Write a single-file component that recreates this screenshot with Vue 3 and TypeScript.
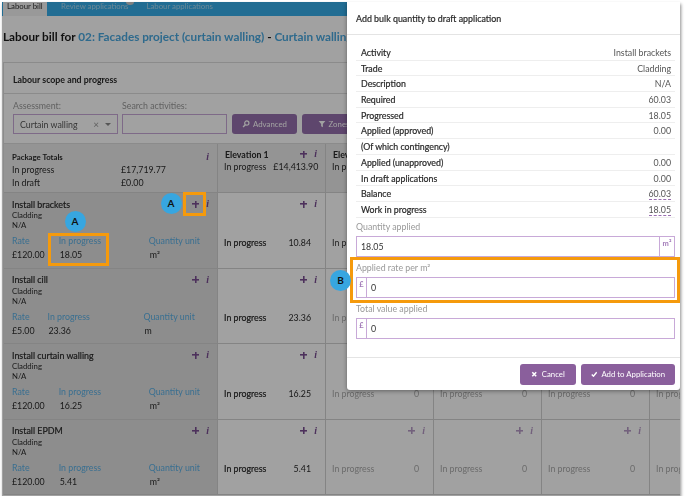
<script setup lang="ts">
interface Activity {
  name: string
  rate: string
  progress: string
  applied: string
  unit: string
  narrow?: boolean
}

const activities: Activity[] = [
  { name: 'Install brackets', rate: '£120.00', progress: '18.05', applied: '10.84', unit: 'm²' },
  { name: 'Install cill', rate: '£5.00', progress: '23.36', applied: '23.36', unit: 'm', narrow: true },
  { name: 'Install curtain walling', rate: '£120.00', progress: '16.25', applied: '16.25', unit: 'm²' },
  { name: 'Install EPDM', rate: '£120.00', progress: '5.41', applied: '5.41', unit: 'm²' }
]

const otherCols = [0, 1, 2, 3]

const facts: [string, string, boolean?][] = [
  ['Activity', 'Install brackets'],
  ['Trade', 'Cladding'],
  ['Description', 'N/A'],
  ['Required', '60.03'],
  ['Progressed', '18.05'],
  ['Applied (approved)', '0.00'],
  ['(Of which contingency)', ''],
  ['Applied (unapproved)', '0.00'],
  ['In draft applications', '0.00'],
  ['Balance', '60.03', true],
  ['Work in progress', '18.05', true]
]
</script>

<template>
  <div class="shot">
    <nav class="tabs">
      <span class="tab active">Labour bill</span>
      <span class="tab review">Review applications<i class="dot"></i></span>
      <span class="tab last">Labour applications</span>
    </nav>

    <h1 class="title">
      Labour bill for <a>02: Facades project (curtain walling)</a> - <a>Curtain walling</a>
    </h1>

    <section class="panel">
      <h2 class="panel-head">Labour scope and progress</h2>
      <div class="filters">
        <div class="field">
          <label>Assessment:</label>
          <div class="box select">
            <span>Curtain walling</span>
            <span class="sel-icons"><b>×</b><i class="caret"></i></span>
          </div>
        </div>
        <div class="field">
          <label>Search activities:</label>
          <div class="box"></div>
        </div>
        <button class="dark-btn adv">
          <svg viewBox="0 0 12 12" class="ico"><circle cx="7.2" cy="4.6" r="3.2" fill="none" stroke="currentColor" stroke-width="1.8" /><path d="M5 7 1.6 10.4" stroke="currentColor" stroke-width="2.2" /></svg>
          Advanced
        </button>
        <button class="dark-btn zones">
          <svg viewBox="0 0 12 12" class="ico"><path d="M1 1.5h10L7.3 6v5L4.7 9.5V6z" fill="currentColor" /></svg>
          Zones
        </button>
      </div>

      <div class="grid-row head-row">
        <div class="first totals">
          <div class="pkg"><span>Package Totals</span><em class="inf">i</em></div>
          <div class="tot"><span>In progress</span><span>£17,719.77</span></div>
          <div class="tot"><span>In draft</span><span>£0.00</span></div>
        </div>
        <div class="cell elev">
          <div class="elev-top"><b>Elevation 1</b><span class="acts"><span class="plus"></span><em class="inf">i</em></span></div>
          <div class="elev-val"><span>In progress</span><span>£14,413.90</span></div>
        </div>
        <div class="cell elev">
          <div class="elev-top"><b>Elevation 2</b></div>
          <div class="elev-val"><span>In progress</span></div>
        </div>
        <div v-for="c in 3" :key="c" class="cell elev"></div>
      </div>

      <div v-for="(a, r) in activities" :key="a.name" class="grid-row act-row">
        <div class="first">
          <div class="act-top"><span class="act-name">{{ a.name }}</span><span class="acts"><span class="plus"></span><em class="inf">i</em></span></div>
          <div class="sub">Cladding</div>
          <div class="sub">N/A</div>
          <div class="stats" :class="{ narrow: a.narrow }">
            <span class="lab">Rate</span><span class="lab">In progress</span><span class="lab">Quantity unit</span>
            <span class="val">{{ a.rate }}</span><span class="val in">{{ a.progress }}</span><span class="val in">{{ a.unit }}</span>
          </div>
        </div>
        <div class="cell act">
          <span class="acts end"><span class="plus"></span><em class="inf">i</em></span>
          <div class="prog"><span class="strong">In progress</span><span>{{ a.applied }}</span></div>
        </div>
        <div v-for="c in otherCols" :key="c" class="cell act muted" :class="{ live: r === 0 && c === 0 }">
          <span class="acts end"><span v-if="r === 3" class="plus"></span><em v-if="r === 3" class="inf">i</em></span>
          <div v-if="r >= 2 || c === 0" class="prog"><span>In progress</span><span v-if="r >= 2">0</span></div>
        </div>
      </div>
    </section>

    <div class="overlay"></div>

    <aside class="modal">
      <h3 class="modal-head">Add bulk quantity to draft application</h3>
      <div class="modal-body">
        <div v-for="f in facts" :key="f[0]" class="fact">
          <span>{{ f[0] }}</span>
          <span class="fact-val" :class="{ dashed: f[2] }">{{ f[1] }}</span>
        </div>
        <label class="mlabel first-label">Quantity applied</label>
        <div class="minput"><span class="mval">18.05</span><span class="addon right">m²</span></div>
        <label class="mlabel">Applied rate per m²</label>
        <div class="minput"><span class="addon">£</span><span class="mval">0</span></div>
        <label class="mlabel">Total value applied</label>
        <div class="minput"><span class="addon">£</span><span class="mval">0</span></div>
      </div>
      <footer class="modal-foot">
        <button class="btn cancel">
          <svg viewBox="0 0 10 10" class="ico2"><path d="M2 2l6 6M8 2l-6 6" stroke="currentColor" stroke-width="2.4" /></svg>
          Cancel
        </button>
        <button class="btn add">
          <svg viewBox="0 0 10 10" class="ico2"><path d="M1.2 5.4 3.8 8 8.8 2" fill="none" stroke="currentColor" stroke-width="2.2" /></svg>
          Add to Application
        </button>
      </footer>
    </aside>

    <span class="mark box-a1"></span>
    <span class="mark box-a2"></span>
    <span class="mark box-b"></span>
    <span class="badge b-a1">A</span>
    <span class="badge b-a2">A</span>
    <span class="badge b-b">B</span>
  </div>
</template>

<style>
html, body { margin: 0; background: #fff; }
</style>

<style scoped>
.shot {
  position: relative;
  width: 678px;
  height: 494px;
  margin: 2px 0 0 2px;
  overflow: hidden;
  background: #fff;
  font-family: Lato, "Liberation Sans", sans-serif;
  font-size: 8.8px;
  color: #2a2a2a;
  box-shadow: 1px 2px 3px rgba(0, 0, 0, .45);
  filter: blur(.4px);
}
.tabs {
  display: flex;
  height: 14px;
  background: #37ade9;
  overflow: hidden;
  padding-left: 1px;
  box-sizing: border-box;
}
.tab { color: #a9d8ee; font-size: 7.8px; line-height: 8px; margin-left: 14px; white-space: nowrap; }
.tab.active {
  margin-left: 0;
  width: 44px;
  background: #f2f2f2;
  color: #333;
  padding-left: 4px;
  box-sizing: border-box;
}
.tab.review { position: relative; }
.tab.last { margin-left: 18px; }
.dot {
  position: absolute;
  right: -6px;
  top: -3px;
  width: 8px;
  height: 6px;
  border-radius: 50%;
  background: #ccc;
}
.title {
  margin: 11px 0 0 1px;
  font-size: 11.75px;
  line-height: 20px;
  font-weight: 700;
  color: #1a1a1a;
  white-space: nowrap;
}
.title a { color: #4aa8df; font-weight: 700; }
.panel {
  margin: 15px 0 0 1px;
  border: 1px solid #dcdcdc;
  border-bottom: 0;
  background: #fff;
  width: 760px;
}
.panel-head {
  margin: 0;
  height: 30px;
  padding-left: 9px;
  font-size: 8.8px;
  line-height: 33px;
  font-weight: 700;
  border-bottom: 1px solid #dcdcdc;
}
.filters {
  display: flex;
  align-items: flex-end;
  gap: 4px;
  height: 50px;
  box-sizing: border-box;
  padding: 0 0 9px 9px;
  border-bottom: 1px solid #dcdcdc;
}
.field { display: flex; flex-direction: column; gap: 3px; width: 105px; }
.field label { color: #999; line-height: 11px; }
.box {
  height: 20px;
  box-sizing: border-box;
  border: 1px solid #c8a9d8;
  display: flex;
  align-items: center;
  justify-content: space-between;
  padding: 0 6px;
  color: #555;
}
.sel-icons { display: flex; align-items: center; gap: 6px; color: #999; }
.sel-icons b { font-weight: 400; font-size: 10px; }
.caret { width: 0; height: 0; border: 3px solid transparent; border-top-color: #888; border-bottom: 0; }
.dark-btn {
  height: 20px;
  border: 0;
  border-radius: 3px;
  background: #9670ad;
  color: #fff;
  font: inherit;
  font-size: 7.8px;
  display: flex;
  align-items: center;
  justify-content: center;
  gap: 3px;
  padding: 0;
  flex: none;
}
.adv { width: 65px; margin-left: 1px; margin-right: 1px; }
.zones { width: 63px; }
.ico { width: 8px; height: 8px; }
.grid-row { display: flex; }
.first {
  flex: none;
  width: 197px;
  padding: 0 8px;
  background: #e0e0e0;
  border-right: 1px solid #d2d2d2;
}
.head-row { height: 48px; border-bottom: 1px solid #d2d2d2; }
.head-row .first { background: #ebebeb; }
.totals { padding-top: 6px; }
.pkg { display: flex; justify-content: space-between; align-items: center; height: 13px; font-weight: 700; font-size: 7.8px; }
.tot { display: flex; height: 13px; line-height: 13px; }
.tot span:first-child { width: 109px; }
.cell { flex: none; width: 107px; border-right: 1px solid #d2d2d2; }
.elev { background: #ebebeb; padding: 4px 0 0; }
.elev-top { display: flex; justify-content: space-between; align-items: center; height: 12px; padding: 0 8px 0 7px; }
.elev-top b { font-weight: 700; }
.elev-val { display: flex; gap: 7px; padding: 0 6px; height: 13px; line-height: 13px; white-space: nowrap; }
.act-row { height: 74.6px; border-bottom: 1px solid #d2d2d2; }
.act-top { display: flex; justify-content: space-between; align-items: center; padding-top: 5px; height: 12px; }
.act-name { font-size: 8.9px; -webkit-text-stroke: .2px currentColor; }
.sub { font-size: 7.8px; line-height: 10px; }
.acts { display: flex; align-items: center; gap: 7px; }
.plus {
  display: block;
  width: 7px;
  height: 7px;
  background:
    linear-gradient(#7a4f92, #7a4f92) center / 7px 1.6px no-repeat,
    linear-gradient(#7a4f92, #7a4f92) center / 1.6px 7px no-repeat;
}
.inf {
  font-family: "Liberation Serif", serif;
  font-size: 10px;
  font-weight: 700;
  font-style: italic;
  color: #7a4f92;
  line-height: 10px;
}
.stats {
  display: grid;
  grid-template-columns: auto 76px auto;
  justify-content: start;
  column-gap: 14px;
  row-gap: 4px;
  margin-top: 6px;
  line-height: 10px;
}
.stats.narrow { grid-template-columns: auto 83px auto; column-gap: 13px; }
.lab { color: #5cb0e4; }
.val.in { padding-left: 1px; }
.act { padding: 5px 0 0; }
.end { justify-content: flex-end; padding-right: 8px; height: 12px; }
.prog {
  display: flex;
  justify-content: space-between;
  padding: 26.5px 14px 0 6px;
  line-height: 12px;
  white-space: nowrap;
}
.prog .strong { -webkit-text-stroke: .2px currentColor; }
.muted { color: #aaa; }
.muted .plus {
  background:
    linear-gradient(#b69ac6, #b69ac6) center / 7px 1.6px no-repeat,
    linear-gradient(#b69ac6, #b69ac6) center / 1.6px 7px no-repeat;
}
.muted .inf { color: #b69ac6; }
.live { color: #333; }
.overlay { position: absolute; inset: 0; background: rgba(0, 0, 0, .37); }
.modal {
  position: absolute;
  left: 345px;
  top: 0;
  width: 333px;
  height: 388px;
  background: #fff;
  display: flex;
  flex-direction: column;
  border-radius: 0 0 3px 3px;
  box-shadow: 0 1px 4px rgba(0, 0, 0, .4);
}
.modal-head {
  margin: 0;
  height: 32px;
  line-height: 34px;
  padding-left: 9px;
  font-size: 8.9px;
  -webkit-text-stroke: .2px currentColor;
  font-weight: 400;
  border-bottom: 1px solid #e4e4e4;
  flex: none;
}
.modal-body { flex: 1; padding: 10px 5px 0 9px; }
.fact {
  display: flex;
  justify-content: space-between;
  height: 15.7px;
  box-sizing: border-box;
  line-height: 15px;
  padding: 0 4px 0 5px;
  border-bottom: 1px solid #eee;
  -webkit-text-stroke: .2px currentColor;
}
.fact:last-of-type { border-bottom: 0; }
.fact-val { color: #555; -webkit-text-stroke: 0; }
.dashed { border-bottom: 1px dashed #9a6fb0; line-height: 11px; height: 11px; margin-top: 2px; }
.mlabel { display: block; color: #999; line-height: 11px; margin: 5px 0 4px; }
.first-label { margin-top: 3px; }
.minput {
  display: flex;
  height: 21px;
  box-sizing: border-box;
  border: 1px solid #c8a9d8;
  align-items: center;
}
.mval { flex: 1; padding-left: 4px; color: #333; }
.addon {
  width: 9px;
  align-self: stretch;
  border-right: 1px solid #c8a9d8;
  color: #a27ab8;
  font-size: 7.5px;
  font-weight: 700;
  text-align: center;
  line-height: 13px;
}
.addon.right { width: 14px; border-right: 0; border-left: 1px solid #c8a9d8; }
.modal-foot {
  flex: none;
  height: 32px;
  border-top: 1px solid #e4e4e4;
  display: flex;
  justify-content: flex-end;
  align-items: center;
  gap: 5px;
  padding: 0 5px 0 0;
}
.btn {
  height: 21px;
  border: 0;
  border-radius: 3px;
  background: #8a5f9c;
  color: #fff;
  font: inherit;
  font-size: 7.8px;
  display: flex;
  align-items: center;
  justify-content: center;
  gap: 4px;
  padding: 0;
}
.cancel { width: 56px; }
.add { width: 94px; }
.ico2 { width: 6.5px; height: 6.5px; }
.mark { position: absolute; border: 3px solid #f59a0c; box-sizing: border-box; }
.box-a1 { left: 181px; top: 190px; width: 23px; height: 24px; }
.box-a2 { left: 46px; top: 231px; width: 61px; height: 33px; }
.box-b { left: 348px; top: 255px; width: 330px; height: 46px; }
.badge {
  position: absolute;
  width: 21px;
  height: 21px;
  border-radius: 50%;
  background: #37a6e0;
  color: #111;
  font-weight: 700;
  font-size: 10px;
  line-height: 21px;
  text-align: center;
}
.b-a1 { left: 158.5px; top: 190.5px; }
.b-a2 { left: 62.5px; top: 208.5px; }
.b-b { left: 328px; top: 268px; }
</style>
